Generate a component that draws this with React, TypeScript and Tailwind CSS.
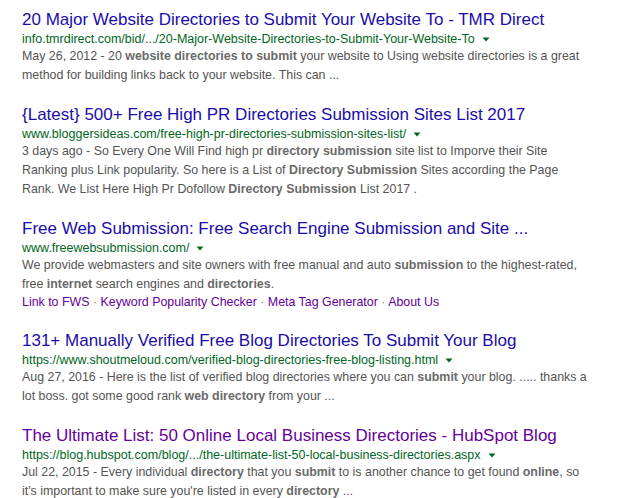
import { JSX, ReactNode } from "react"

type Result = {
  title: string
  url: string
  visited?: boolean
  lines: ReactNode[]
  sitelinks?: string[]
}

const B = ({ children }: { children: ReactNode }) => <b className="font-bold text-[#6a6a6a]">{children}</b>

const results: Result[] = [
  {
    title: "20 Major Website Directories to Submit Your Website To - TMR Direct",
    url: "info.tmrdirect.com/bid/.../20-Major-Website-Directories-to-Submit-Your-Website-To",
    lines: [
      <>May 26, 2012 - 20 <B>website directories to submit</B> your website to Using website directories is a great</>,
      <>method for building links back to your website. This can ...</>,
    ],
  },
  {
    title: "{Latest} 500+ Free High PR Directories Submission Sites List 2017",
    url: "www.bloggersideas.com/free-high-pr-directories-submission-sites-list/",
    lines: [
      <>3 days ago - So Every One Will Find high pr <B>directory submission</B> site list to Imporve their Site</>,
      <>Ranking plus Link popularity. So here is a List of <B>Directory Submission</B> Sites according the Page</>,
      <>Rank. We List Here High Pr Dofollow <B>Directory Submission</B> List 2017 .</>,
    ],
  },
  {
    title: "Free Web Submission: Free Search Engine Submission and Site ...",
    url: "www.freewebsubmission.com/",
    lines: [
      <>We provide webmasters and site owners with free manual and auto <B>submission</B> to the highest-rated,</>,
      <>free <B>internet</B> search engines and <B>directories</B>.</>,
    ],
    sitelinks: ["Link to FWS", "Keyword Popularity Checker", "Meta Tag Generator", "About Us"],
  },
  {
    title: "131+ Manually Verified Free Blog Directories To Submit Your Blog",
    url: "https://www.shoutmeloud.com/verified-blog-directories-free-blog-listing.html",
    lines: [
      <>Aug 27, 2016 - Here is the list of verified blog directories where you can <B>submit</B> your blog. ..... thanks a</>,
      <>lot boss. got some good rank <B>web directory</B> from your ...</>,
    ],
  },
  {
    title: "The Ultimate List: 50 Online Local Business Directories - HubSpot Blog",
    url: "https://blog.hubspot.com/blog/.../the-ultimate-list-50-local-business-directories.aspx",
    visited: true,
    lines: [
      <>Jul 22, 2015 - Every individual <B>directory</B> that you <B>submit</B> to is another chance to get found <B>online</B>, so</>,
      <>it's important to make sure you're listed in every <B>directory</B> ...</>,
    ],
  },
]

function Caret(): JSX.Element {
  return (
    <svg width="8" height="5" viewBox="0 0 8 5" className="ml-[7px] inline-block">
      <path d="M0.5 0.5 L7.5 0.5 L4 4.5 Z" fill="#006621" />
    </svg>
  )
}

function SearchResult({ r }: { r: Result }): JSX.Element {
  return (
    <div className="mb-[18px]">
      <div className={`text-[17px] leading-[23px] whitespace-nowrap ${r.visited ? "text-[#660099]" : "text-[#1a0dab]"}`}>
        {r.title}
      </div>
      <div className="flex items-center text-[12.5px] leading-[16px] text-[#006621] whitespace-nowrap">
        <span>{r.url}</span>
        <Caret />
      </div>
      <div className="text-[12.4px] leading-[19px] text-[#545454] whitespace-nowrap">
        {r.lines.map((l, i) => (
          <div key={i}>{l}</div>
        ))}
        {r.sitelinks && (
          <div className="leading-[17px] text-[#660099]">
            {r.sitelinks.map((s, i) => (
              <span key={s}>
                {i > 0 && <span className="text-[#808080]"> · </span>}
                {s}
              </span>
            ))}
          </div>
        )}
      </div>
    </div>
  )
}

export default function App(): JSX.Element {
  return (
    <div className="w-[618px] h-[498px] overflow-hidden bg-white pl-[22px] pt-[8px] font-['Liberation_Sans',Arial,sans-serif]">
      {results.map((r) => (
        <SearchResult key={r.title} r={r} />
      ))}
    </div>
  )
}
